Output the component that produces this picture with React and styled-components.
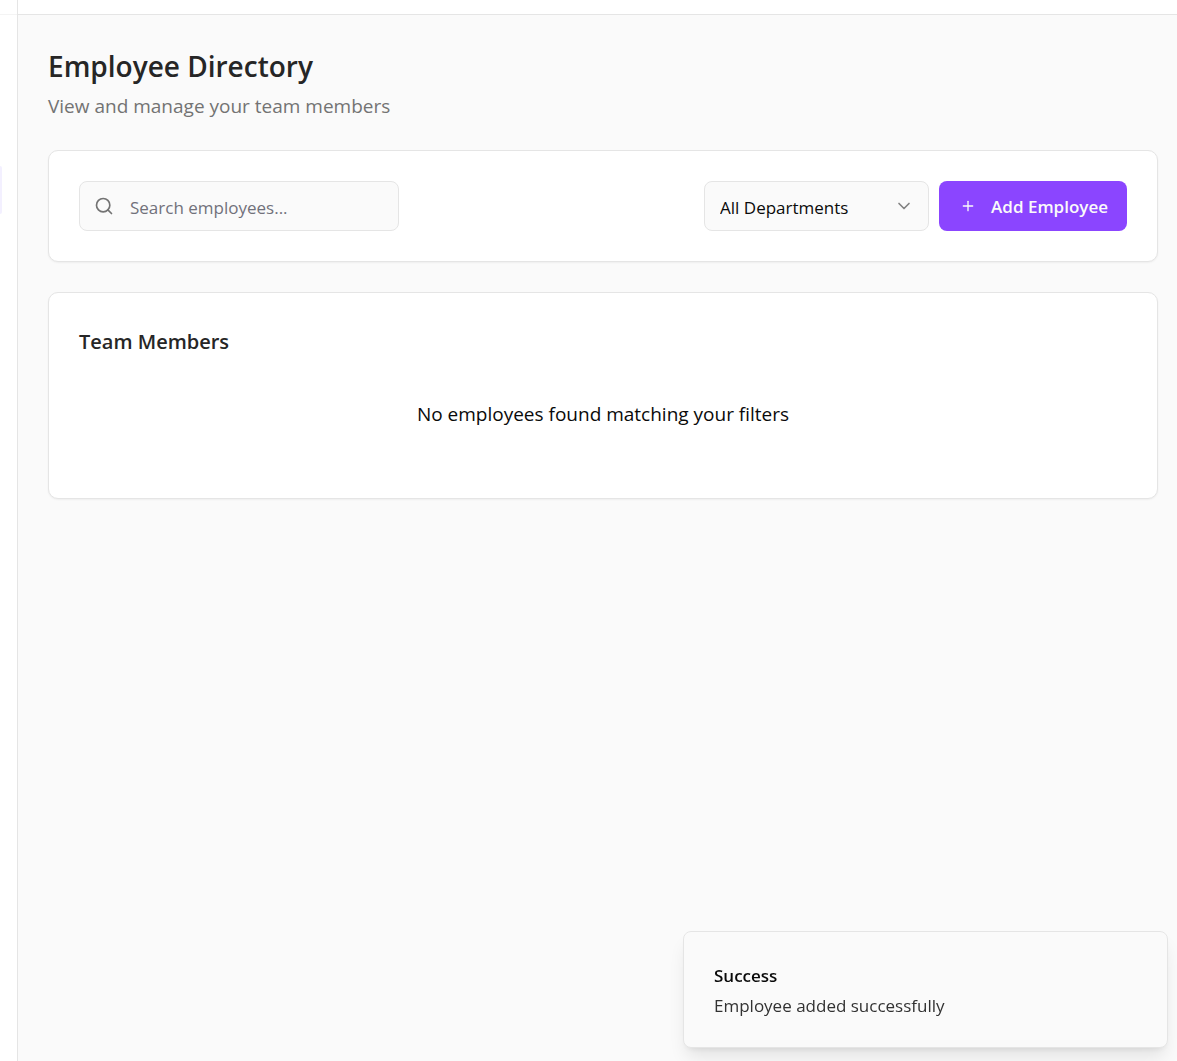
import React, { useState } from "react";
import styled, { createGlobalStyle } from "styled-components";
import { ChevronDown, Plus, Search } from "lucide-react";

const GlobalStyle = createGlobalStyle`
  *, *::before, *::after { box-sizing: border-box; }
  body {
    margin: 0;
    background: #fafafa;
    color: #0a0a0a;
    font-family: "Open Sans", "Noto Sans", sans-serif;
    font-size: 19px;
    line-height: 30px;
  }
  h1, h2, p { margin: 0; }
  input, select, button { font: inherit; }
`;

const Shell = styled.div`
  display: flex;
  min-height: 100vh;
`;

const Sidebar = styled.aside`
  flex: 0 0 18px;
  background: #ffffff;
  border-right: 1px solid #e5e5e5;
`;

const SidebarHeader = styled.div`
  height: 15px;
  border-bottom: 1px solid #f4f4f4;
`;

const SidebarNav = styled.nav`
  padding-top: 151px;
`;

const ActiveItem = styled.a`
  display: block;
  width: 2px;
  height: 48px;
  border-radius: 0 8px 8px 0;
  background: #f3f0ff;
`;

const Content = styled.div`
  flex: 1;
  min-width: 0;
`;

const TopBar = styled.header`
  height: 15px;
  background: #ffffff;
  border-bottom: 1px solid #e5e5e5;
`;

const Main = styled.main`
  display: flex;
  flex-direction: column;
  gap: 30px;
  padding: 30px 19px 30px 30px;
`;

const PageTitle = styled.h1`
  font-size: 28px;
  line-height: 43px;
  font-weight: 600;
  color: #262626;
`;

const Subtitle = styled.p`
  padding-top: 4px;
  line-height: 28px;
  color: #737373;
`;

const Card = styled.section`
  padding: 30px;
  background: #ffffff;
  border: 1px solid #e5e5e5;
  border-radius: 10px;
  box-shadow: 0 1px 2px rgba(0, 0, 0, 0.05);
`;

const Toolbar = styled(Card)`
  display: flex;
  flex-wrap: wrap;
  justify-content: space-between;
  gap: 10px;
`;

const Actions = styled.div`
  display: flex;
  gap: 10px;
`;

const Field = styled.label`
  display: flex;
  align-items: center;
  position: relative;
  width: ${(p) => p.$width};
  height: 50px;

  svg {
    position: absolute;
    ${(p) => p.$iconSide}: 15px;
    color: ${(p) => p.$iconColor};
    pointer-events: none;
  }
`;

const controlStyle = `
  width: 100%;
  height: 100%;
  border: 1px solid #e5e5e5;
  border-radius: 8px;
  background: #fafafa;
  color: #0a0a0a;
`;

const SearchInput = styled.input`
  ${controlStyle}
  padding: 2px 15px 0 50px;
  font-size: 17px;

  &::placeholder {
    color: #71717a;
    opacity: 1;
  }
`;

const Select = styled.select`
  ${controlStyle}
  appearance: none;
  padding: 3px 40px 0 15px;
  font-size: 17px;
`;

const PrimaryButton = styled.button`
  display: flex;
  align-items: center;
  gap: 15px;
  height: 50px;
  padding: 0 19px 0 21px;
  border: 0;
  border-radius: 8px;
  background: #8b45ff;
  color: #fafafa;
  font-size: 17px;
  font-weight: 600;
  cursor: pointer;
`;

const ButtonLabel = styled.span`
  padding-top: 2px;
`;

const SectionTitle = styled.h2`
  padding-top: 4px;
  font-size: 20px;
  font-weight: 600;
  color: #262626;
`;

const EmptyState = styled.p`
  padding: 42px 0 39px;
  text-align: center;
`;

const Toast = styled.div`
  position: fixed;
  right: 9px;
  bottom: 13px;
  width: 485px;
  max-width: calc(100vw - 18px);
  padding: 29px 30px 26px;
  border: 1px solid #e5e5e5;
  border-radius: 8px;
  background: #fafafa;
  box-shadow: 0 12px 18px -4px rgba(0, 0, 0, 0.1), 0 4px 7px -4px rgba(0, 0, 0, 0.1);
  font-size: 17px;
`;

const ToastTitle = styled.p`
  font-weight: 600;
`;

const ToastText = styled.p`
  color: #323232;
`;

export default function App() {
  const [query, setQuery] = useState("");

  return (
    <>
      <GlobalStyle />
      <Shell>
        <Sidebar>
          <SidebarHeader />
          <SidebarNav>
            <ActiveItem href="#employees" />
          </SidebarNav>
        </Sidebar>
        <Content>
          <TopBar />
          <Main>
            <div>
              <PageTitle>Employee Directory</PageTitle>
              <Subtitle>View and manage your team members</Subtitle>
            </div>
            <Toolbar>
              <Field htmlFor="search" $width="320px" $iconSide="left" $iconColor="#737373">
                <Search size={20} strokeWidth={2} aria-hidden="true" />
                <SearchInput
                  id="search"
                  type="text"
                  placeholder="Search employees..."
                  value={query}
                  onChange={(e) => setQuery(e.target.value)}
                />
              </Field>
              <Actions>
                <Field htmlFor="department" $width="225px" $iconSide="right" $iconColor="#828282">
                  <Select id="department" defaultValue="all">
                    <option value="all">All Departments</option>
                  </Select>
                  <ChevronDown size={20} strokeWidth={2} aria-hidden="true" />
                </Field>
                <PrimaryButton type="button">
                  <Plus size={16} strokeWidth={2} aria-hidden="true" />
                  <ButtonLabel>Add Employee</ButtonLabel>
                </PrimaryButton>
              </Actions>
            </Toolbar>
            <Card>
              <SectionTitle>Team Members</SectionTitle>
              <EmptyState>No employees found matching your filters</EmptyState>
            </Card>
          </Main>
        </Content>
      </Shell>
      <Toast role="status">
        <ToastTitle>Success</ToastTitle>
        <ToastText>Employee added successfully</ToastText>
      </Toast>
    </>
  );
}
